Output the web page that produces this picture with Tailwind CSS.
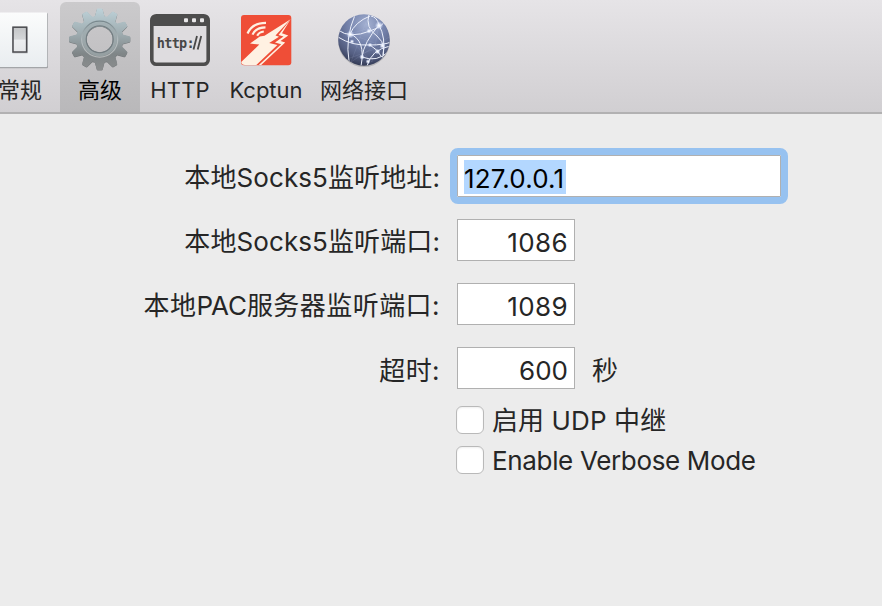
<!DOCTYPE html>
<html lang="zh-CN">
<head>
<meta charset="utf-8">
<title>高级</title>
<script src="https://cdn.jsdelivr.net/npm/@tailwindcss/browser@4"></script>
</head>
<body class="w-[882px] h-[606px] overflow-hidden bg-[#ececec] font-['Inter','Noto_Sans_CJK_SC',sans-serif] text-[26px] text-[#262626]">
<header class="flex h-[114px] border-b-2 border-[#b2b1b2] bg-linear-to-b from-[#e6e4e7] to-[#d1cfd2] text-[22px] leading-[32px] whitespace-nowrap">
  <div class="-ml-5 flex w-20 shrink-0 flex-col items-center">
    <svg class="h-[74px] w-20 shrink-0" viewBox="-20 0 80 74">
      <defs>
        <linearGradient id="pl" x2="0" y2="1"><stop stop-color="#fbfcfc"/><stop offset="1" stop-color="#e9edf0"/></linearGradient>
        <linearGradient id="sw" x2="0" y2="1"><stop stop-color="#c3c5c7"/><stop offset=".48" stop-color="#d4d6d8"/><stop offset=".52" stop-color="#eceef0"/><stop offset="1" stop-color="#e5e7e9"/></linearGradient>
      </defs>
      <rect x="-8" y="13" width="56" height="55.2" rx="1" fill="#a3a5a8"/>
      <rect x="-8" y="12.5" width="55.2" height="54.5" rx="1" fill="url(#pl)"/>
      <rect x="12" y="26.5" width="16" height="27" rx="1" fill="#c7cacd"/>
      <rect x="13" y="27.2" width="13.6" height="24.8" fill="url(#sw)" stroke="#4c4c50" stroke-width="1.5"/>
    </svg>
    <span>常规</span>
  </div>
  <div class="mt-0.5 flex h-[110px] w-20 shrink-0 flex-col items-center rounded-t-[6px] bg-linear-to-b from-[#cbcacc] to-[#b9b8ba] text-black">
    <svg class="h-[72px] w-20 shrink-0" viewBox="60.300 2.300 80 72">
      <defs>
        <linearGradient id="gr" gradientUnits="userSpaceOnUse" x1="100" y1="8" x2="100" y2="70"><stop stop-color="#bfd3da"/><stop offset=".4" stop-color="#a0aeb2"/><stop offset=".75" stop-color="#7f8587"/><stop offset="1" stop-color="#8b8d8e"/></linearGradient>
        <linearGradient id="rg" x2="0" y2="1"><stop stop-color="#78878c"/><stop offset=".5" stop-color="#b3bcbf"/><stop offset="1" stop-color="#b5b8b9"/></linearGradient>
        <clipPath id="gc"><path id="tooth" d="M94.5 19L97 9.8Q97.200 8.8 98.200 8.8H101.800Q102.800 8.8 103 9.8L105.5 19Z"/><use href="#tooth" transform="rotate(30 100 39.5)"/><use href="#tooth" transform="rotate(60 100 39.5)"/><use href="#tooth" transform="rotate(90 100 39.5)"/><use href="#tooth" transform="rotate(120 100 39.5)"/><use href="#tooth" transform="rotate(150 100 39.5)"/><use href="#tooth" transform="rotate(180 100 39.5)"/><use href="#tooth" transform="rotate(210 100 39.5)"/><use href="#tooth" transform="rotate(240 100 39.5)"/><use href="#tooth" transform="rotate(270 100 39.5)"/><use href="#tooth" transform="rotate(300 100 39.5)"/><use href="#tooth" transform="rotate(330 100 39.5)"/><path clip-rule="evenodd" d="M76.5 39.5a23.5 23.5 0 1 0 47 0a23.5 23.5 0 1 0-47 0ZM87 39.5a13 13 0 1 0 26 0a13 13 0 1 0-26 0Z"/></clipPath>
      </defs>
      <rect x="66" y="6" width="68" height="68" transform="translate(0 .6)" clip-path="url(#gc)" fill="#727678"/>
      <rect x="66" y="5" width="68" height="68" clip-path="url(#gc)" fill="url(#gr)"/>
      <circle cx="100" cy="39.5" r="18" fill="none" stroke="url(#rg)" stroke-width="1.2"/>
      <circle cx="100" cy="39.5" r="15.500" fill="none" stroke="#a0abae" stroke-width="3.2" opacity=".7"/>
      <circle cx="100" cy="39.5" r="13.500" fill="none" stroke="#727c80" stroke-width="1.1"/>
    </svg>
    <span>高级</span>
  </div>
  <div class="flex w-20 shrink-0 flex-col items-center">
    <svg class="h-[74px] w-20 shrink-0" viewBox="140 0 80 74">
      <rect x="151.8" y="15.8" width="56.4" height="48.4" rx="4.5" fill="#dedcdf" stroke="#4d4d4d" stroke-width="3.6"/>
      <path d="M151 26V19q0-4 4-4h50q4 0 4 4v7Z" fill="#4d4d4d"/>
      <g fill="#e9e8e9"><rect x="184" y="18.3" width="4" height="4" rx="1"/><rect x="192" y="18.3" width="4" height="4" rx="1"/><rect x="200" y="18.3" width="4" height="4" rx="1"/></g>
      <text x="156.700" y="47.700" font-family="DejaVu Sans Mono" font-weight="700" font-size="13.500" textLength="38" lengthAdjust="spacing" fill="#484848">http:</text>
      <path d="M193.5 49.5L197 36M197.700 49.500L201.200 36" stroke="#484848" stroke-width="1.8"/>
    </svg>
    <span class="tracking-[.2px]">HTTP</span>
  </div>
  <div class="flex w-[92px] shrink-0 flex-col items-center">
    <svg class="h-[74px] w-[92px] shrink-0" viewBox="220 0 92 74">
      <rect x="241" y="15" width="50.300" height="50.300" rx="3" fill="#ef4e37"/>
      <g fill="#fff1e2">
        <path d="M290.600 19.300L264.500 35.800L259.800 36.500L250 43.600L259.300 44.600L241.200 62Q241.500 65 245 65H256.300L277.400 45L269.200 43L279 36.700L275.500 35.500Z"/>
        <path d="M290.600 19.300L282 33.300L288.300 35.500L280.500 41L285.200 42.500L261.200 65H258.800L281.200 44.300L275 42.500L283.500 36.500L278.500 35Z"/>
      </g>
      <g fill="none" stroke="#fff1e2" stroke-width="2.200"><path d="M247.500 33.500Q252 22.800 266 22.800"/><path d="M252.500 34.700Q255.500 27.500 265.500 27.300"/><path d="M257.200 35.700Q259 32 263.800 31.500"/></g>
    </svg>
    <span>Kcptun</span>
  </div>
  <div class="flex w-[104px] shrink-0 flex-col items-center">
    <svg class="h-[74px] w-[104px] shrink-0" viewBox="312 0 104 74">
      <defs>
        <radialGradient id="gl" cx=".55" cy=".2" r=".8"><stop stop-color="#a4b1d2"/><stop offset=".45" stop-color="#7482ab"/><stop offset=".8" stop-color="#535d80"/><stop offset="1" stop-color="#343b56"/></radialGradient>
        <radialGradient id="nd"><stop stop-color="#fff"/><stop offset=".35" stop-color="#eef3ff" stop-opacity=".85"/><stop offset="1" stop-color="#cfdcff" stop-opacity="0"/></radialGradient>
        <clipPath id="gb"><circle cx="364" cy="40" r="25.500"/></clipPath>
      </defs>
      <ellipse cx="364" cy="41.300" rx="25.800" ry="25.800" fill="#a7a6aa" opacity=".7"/>
      <circle cx="364" cy="40" r="25.800" fill="url(#gl)"/>
      <g clip-path="url(#gb)">
        <path d="M340 29L372 62L379 25L350 34L383 46L350 58M369 14L351 62L389 37" stroke="#bfc9e4" stroke-width=".5" fill="none" opacity=".25"/>
        <g fill="none" stroke="#edf1fc" stroke-width="1">
          <path d="M338 30Q350 39 370 31Q384 26 385 20"/><path d="M338 37Q352 46 370 45Q384 45 391 42"/><path d="M355 15Q345 38 349 61"/><path d="M369 14Q365 28 377 36Q389 46 380 64"/><path d="M350 34Q366 40 361 66"/><path d="M379 25Q364 42 362 57Q377 63 389 51"/><path d="M350 34Q355 22 370 16"/><path d="M367 66Q371 50 390 46"/><path d="M379 25Q386 38 383 55"/><path d="M371 16Q377 17 379 25"/><path d="M370 45Q378 50 381 56"/>
        </g>
      </g>
      <g fill="url(#nd)"><circle cx="350.300" cy="34.500" r="4"/><circle cx="379" cy="25.500" r="4.200"/><circle cx="369" cy="31" r="2.800"/><circle cx="382.500" cy="45.800" r="3.200"/><circle cx="370" cy="45" r="2.500"/><circle cx="362" cy="57" r="2.800"/><circle cx="377.500" cy="51.500" r="3"/><circle cx="368" cy="61.500" r="2.500"/><circle cx="352" cy="41.500" r="2.300"/></g>
    </svg>
    <span>网络接口</span>
  </div>
</header>
<main class="pt-[41px] leading-[42px] whitespace-nowrap">
  <div class="flex h-[42px]">
    <label class="w-[440px] pt-0.5 text-right tracking-[.1px]">本地Socks5监听地址:</label>
    <div class="ml-[17px] flex h-[42px] w-[324px] border border-[#b0b0b0] bg-white pt-1 pl-[6px] outline-[7px] outline-[#97c2f0] rounded-[1px]"><span class="h-[34px] w-[102px] bg-[#b3d7ff] leading-[38px] tracking-[.15px] text-black">127.0.0.1</span></div>
  </div>
  <div class="mt-[22px] flex h-[42px]">
    <label class="w-[440px] pt-0.5 text-right tracking-[.1px]">本地Socks5监听端口:</label>
    <div class="ml-[17px] w-[118px] border border-[#b0b0b0] bg-white pr-[6px] text-right leading-[45px] tracking-[.4px]">1086</div>
  </div>
  <div class="mt-[22px] flex h-[42px]">
    <label class="w-[440px] pt-0.5 text-right tracking-[.45px]">本地<span class="tracking-[-.1px]">PAC</span>服务器监听端口:</label>
    <div class="ml-[17px] w-[118px] border border-[#b0b0b0] bg-white pr-[6px] text-right leading-[45px] tracking-[.4px]">1089</div>
  </div>
  <div class="mt-[22px] flex h-[42px]">
    <label class="w-[440px] pt-[3px] text-right tracking-[.4px]">超时:</label>
    <div class="ml-[17px] w-[118px] border border-[#b0b0b0] bg-white pr-[6px] text-right leading-[45px]">600</div>
    <span class="ml-[17px] pt-[3px]">秒</span>
  </div>
  <div class="mt-[11px] ml-[456px] flex h-10 items-center gap-2 leading-10">
    <i class="size-7 rounded-[6px] border border-[#b9b9b9] bg-white shadow-[inset_0_1px_2px_#0001]"></i><span class="pt-0.5 tracking-[.1px]">启用 UDP 中继</span>
  </div>
  <div class="ml-[456px] flex h-10 items-center gap-2 leading-10">
    <i class="size-7 rounded-[6px] border border-[#b9b9b9] bg-white shadow-[inset_0_1px_2px_#0001]"></i><span class="pt-0.5 tracking-[-.34px]">Enable Verbose Mode</span>
  </div>
</main>
</body>
</html>
